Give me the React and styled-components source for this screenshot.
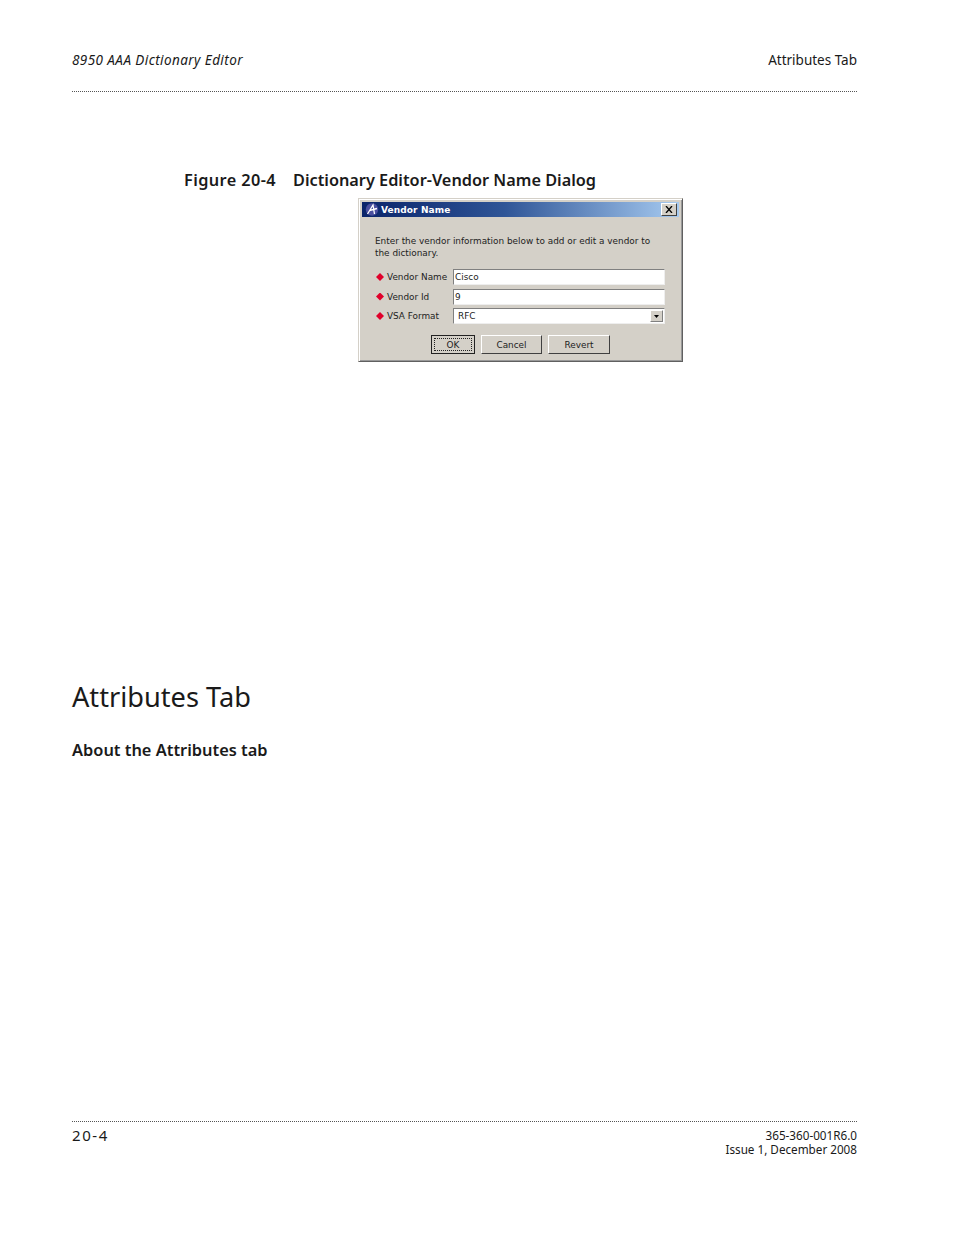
import React from "react";
import styled, { createGlobalStyle } from "styled-components";

const GlobalStyle = createGlobalStyle`
  html, body {
    margin: 0;
    padding: 0;
    background: #fff;
  }
`;

const Page = styled.div`
  width: 954px;
  height: 1235px;
  box-sizing: border-box;
  padding: 52px 97px 0 72px;
  display: flex;
  flex-direction: column;
  font-family: "Noto Sans", "Open Sans", sans-serif;
  color: #1a1a1a;
`;

const Header = styled.header`
  display: flex;
  justify-content: space-between;
  height: 39px;
  border-bottom: 1px dotted #555;
  font-size: 13.5px;
  line-height: 17px;
`;

const HeaderTitle = styled.span`
  font-style: italic;
  letter-spacing: 0.42px;
`;

const FigureCaption = styled.div`
  margin: 77px 0 0 112px;
  font-size: 16.3px;
  line-height: 22px;
  font-weight: 600;
  display: flex;
  gap: 17px;
`;

const FigureNumber = styled.span`
  letter-spacing: 0.4px;
`;

const DialogWrap = styled.div`
  margin: 7px 0 0 286px;
`;

const Dialog = styled.div`
  width: 325px;
  height: 164px;
  box-sizing: border-box;
  background: #d4d0c8;
  border: 1px solid #606060;
  border-top-color: #d4d0c8;
  border-left-color: #d4d0c8;
  box-shadow: inset 1px 1px 0 #fff, inset -1px -1px 0 #999;
  padding: 3px;
  font-family: "DejaVu Sans", sans-serif;
  font-size: 8.9px;
  color: #222;
  display: flex;
  flex-direction: column;
`;

const TitleBar = styled.div`
  height: 15px;
  flex: none;
  background: linear-gradient(90deg, #0a246a 0%, #2f5597 45%, #a6caf0 100%);
  display: flex;
  align-items: center;
  padding: 0 2px 0 3px;
  gap: 2px;
  color: #fff;
  font-weight: 700;
  font-size: 9px;
  letter-spacing: 0.1px;
`;

const TitleText = styled.span`
  flex: 1;
`;

const CloseButton = styled.div`
  width: 16px;
  height: 13px;
  box-sizing: border-box;
  background: #d4d0c8;
  border: 1px solid #404040;
  border-top-color: #fff;
  border-left-color: #fff;
  display: flex;
  align-items: center;
  justify-content: center;
`;

const Intro = styled.p`
  margin: 18px 0 0 13px;
  width: 290px;
  line-height: 12px;
`;

const Form = styled.div`
  margin: 10px 0 0 14px;
  display: grid;
  grid-template-columns: 77px 212px;
  grid-auto-rows: 16px;
  row-gap: 3.5px;
  align-items: center;
`;

const FieldLabel = styled.label`
  display: flex;
  align-items: center;
  gap: 3px;
`;

const Required = styled.i`
  width: 8px;
  height: 8px;
  background: #e0002a;
  clip-path: polygon(50% 0, 100% 50%, 50% 100%, 0 50%);
`;

const Field = styled.div`
  height: 16px;
  box-sizing: border-box;
  background: #fff;
  border: 1px solid #808080;
  border-right-color: #eee;
  border-bottom-color: #eee;
  padding-left: ${props => (props.$select ? "4px" : "1px")};
  line-height: 14px;
  display: flex;
  justify-content: space-between;
  align-items: center;
`;

const SelectArrow = styled.div`
  width: 13px;
  height: 12px;
  margin-right: 1px;
  box-sizing: border-box;
  background: #d4d0c8;
  border: 1px solid #808080;
  border-top-color: #fff;
  border-left-color: #fff;
  display: flex;
  align-items: center;
  justify-content: center;
`;

const ButtonRow = styled.div`
  margin: 11px 0 0 69px;
  display: flex;
  gap: 6px;
`;

const Button = styled.div`
  width: ${props => props.$width}px;
  height: 19px;
  box-sizing: border-box;
  background: #d4d0c8;
  border: 1px solid #404040;
  border-top-color: #fff;
  border-left-color: #fff;
  display: flex;
  align-items: center;
  justify-content: center;
  ${props => props.$default && `
    border: 1px solid #222;
    outline: 1px dotted #222;
    outline-offset: -4px;
  `}
`;

const SectionTitle = styled.h1`
  margin: 315px 0 0;
  font-size: 27.2px;
  line-height: 40px;
  font-weight: 400;
`;

const SubTitle = styled.h2`
  margin: 22px 0 0;
  font-size: 16.4px;
  line-height: 22px;
  font-weight: 600;
`;

const Footer = styled.footer`
  margin-top: 360px;
  border-top: 1px dotted #555;
  display: flex;
  justify-content: space-between;
  padding-top: 3px;
`;

const PageNumber = styled.span`
  font-size: 15px;
  line-height: 20px;
  letter-spacing: 1.6px;
`;

const DocInfo = styled.div`
  text-align: right;
  font-size: 11.7px;
  line-height: 14px;
  padding-top: 3px;
`;

const AppLogo = () => (
  <svg width="14" height="13" viewBox="0 0 14 13">
    <circle cx="7" cy="6.5" r="6.2" fill="#4a4f9f" />
    <path d="M2.5 11 L8 2 L9.5 11 M4.5 7.5 L12 5.5" stroke="#fff" strokeWidth="1.3" fill="none" />
  </svg>
);

const fields = [
  { label: "Vendor Name", value: "Cisco" },
  { label: "Vendor Id", value: "9" },
  { label: "VSA Format", value: "RFC", select: true },
];

export default function App() {
  return (
    <Page>
      <GlobalStyle />
      <Header>
        <HeaderTitle>8950 AAA Dictionary Editor</HeaderTitle>
        <span>Attributes Tab</span>
      </Header>

      <FigureCaption>
        <FigureNumber>Figure 20-4</FigureNumber>
        <span>Dictionary Editor-Vendor Name Dialog</span>
      </FigureCaption>

      <DialogWrap>
        <Dialog>
          <TitleBar>
            <AppLogo />
            <TitleText>Vendor Name</TitleText>
            <CloseButton>
              <svg width="8" height="7" viewBox="0 0 8 7">
                <path d="M1 0 L7 7 M7 0 L1 7" stroke="#000" strokeWidth="1.3" />
              </svg>
            </CloseButton>
          </TitleBar>
          <Intro>Enter the vendor information below to add or edit a vendor to the dictionary.</Intro>
          <Form>
            {fields.map(field => (
              <React.Fragment key={field.label}>
                <FieldLabel>
                  <Required />
                  {field.label}
                </FieldLabel>
                <Field $select={field.select}>
                  {field.value}
                  {field.select && (
                    <SelectArrow>
                      <svg width="5" height="3" viewBox="0 0 5 3">
                        <path d="M0 0 H5 L2.5 3 Z" fill="#000" />
                      </svg>
                    </SelectArrow>
                  )}
                </Field>
              </React.Fragment>
            ))}
          </Form>
          <ButtonRow>
            <Button $width={44} $default>OK</Button>
            <Button $width={61}>Cancel</Button>
            <Button $width={62}>Revert</Button>
          </ButtonRow>
        </Dialog>
      </DialogWrap>

      <SectionTitle>Attributes Tab</SectionTitle>
      <SubTitle>About the Attributes tab</SubTitle>

      <Footer>
        <PageNumber>20-4</PageNumber>
        <DocInfo>
          365-360-001R6.0
          <br />
          Issue 1, December 2008
        </DocInfo>
      </Footer>
    </Page>
  );
}
